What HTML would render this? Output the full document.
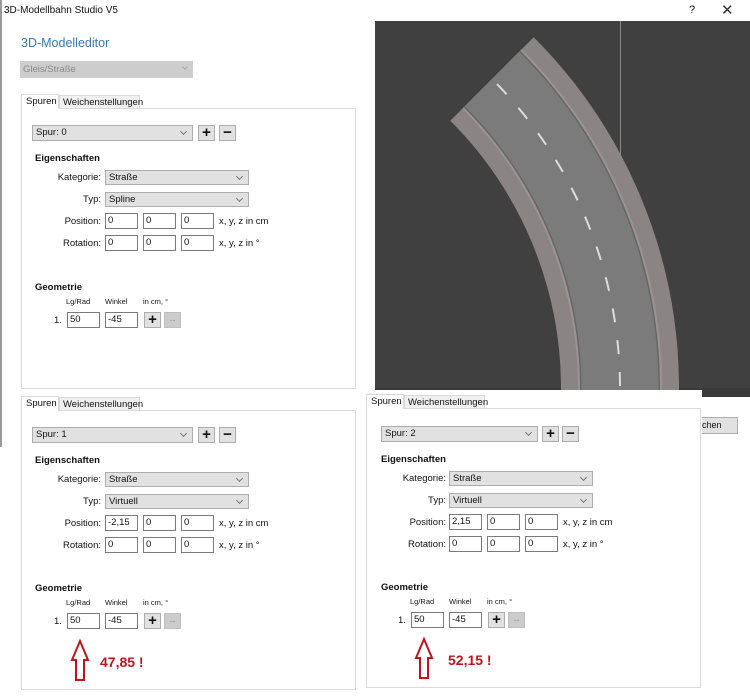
<!DOCTYPE html>
<html><head><meta charset="utf-8">
<style>
*{box-sizing:border-box;margin:0;padding:0}
body{width:750px;height:697px;background:#fff;position:relative;overflow:hidden;font-family:"Liberation Sans",sans-serif;font-size:9.5px;color:#111}
.a{position:absolute}
.panel{position:absolute;width:335px;height:295px}
.box{position:absolute;left:0;top:14px;width:335px;height:281px;border:1px solid #d9d9d9;background:#fff}
.tab{position:absolute;top:0;height:15px;line-height:14px;padding:0 4px;font-size:9.5px}
.t1{left:0;width:38px;background:#fff;border:1px solid #d9d9d9;border-bottom:none;z-index:2;height:15px}
.t2{left:38px;width:81px;top:1px;height:14px;background:#f0f0f0;border:1px solid #d9d9d9;padding:0 3px}
.cb{position:absolute;height:16px;background:#e1e1e1;border:1px solid #adadad;line-height:14px;padding-left:3px}
.cb:after{content:"";position:absolute;right:6px;top:3px;width:4px;height:4px;border-right:1px solid #777;border-bottom:1px solid #777;transform:rotate(45deg)}
.btn{position:absolute;width:17px;height:16px;background:#e1e1e1;border:1px solid #adadad;text-align:center;line-height:14px;font-size:15px;font-weight:bold}
.dis{background:#ccc;border-color:#bfbfbf;color:#999;font-size:9px;font-weight:normal}
.in{position:absolute;height:16px;background:#fff;border:1px solid #7a7a7a;line-height:14px;padding-left:2px}
.lbl{position:absolute;text-align:right;width:80px}
.b{position:absolute;font-weight:bold;font-size:9.5px}
.red{position:absolute;color:#c0141c;font-weight:bold;font-size:14px}
</style></head><body>
<div class="a" style="left:0;top:0;width:750px;height:21px;background:#fff"></div>
<div class="a" style="left:0;top:0;width:2px;height:447px;background:#9a9a9a"></div>
<div class="a" style="left:4px;top:5px;font-size:10px">3D-Modellbahn Studio V5</div>
<div class="a" style="left:689px;top:4px;font-size:11px">?</div>
<div class="a" style="left:721px;top:1px;font-size:15px;color:#333">✕</div>
<div class="a" style="left:21px;top:36px;font-size:12.5px;color:#3a78b0">3D-Modelleditor</div>
<div class="a" style="left:20px;top:61px;width:173px;height:17px;background:#cdcdcd;color:#8a8a8a;line-height:17px;padding-left:3px">Gleis/Straße</div>
<div class="a" style="left:183px;top:65px;width:4px;height:4px;border-right:1px solid #aaa;border-bottom:1px solid #aaa;transform:rotate(45deg)"></div>

<svg class="a" style="left:375px;top:21px" width="375" height="376" viewBox="375 21 375 376">
<rect x="375" y="21" width="375" height="376" fill="#404040"/>
<line x1="620.5" y1="21" x2="620.5" y2="160" stroke="#8a8a8a" stroke-width="1"/>
<rect x="375" y="388" width="375" height="9" fill="#3a3a3a"/>
<g fill="none">
<path d="M620 392 L620 388 A437 437 0 0 0 492 79" stroke="#8b8484" stroke-width="118"/>
<path d="M620 392 L620 388 A437 437 0 0 0 492 79" stroke="#9a9494" stroke-width="84"/>
<path d="M620 392 L620 388 A437 437 0 0 0 492 79" stroke="#666" stroke-width="80"/>
<path d="M620 392 L620 388 A437 437 0 0 0 492 79" stroke="#7b7b7b" stroke-width="77"/>
<path d="M620 388 A437 437 0 0 0 492 79" stroke="#dcdcdc" stroke-width="2" stroke-dasharray="14 18" stroke-dashoffset="-2"/>
</g>
</svg>
<div class="a" style="left:700px;top:417px;width:38px;height:17px;background:#e1e1e1;border:1px solid #adadad;line-height:15px;font-size:9px;padding-left:1px">chen</div>

<!-- panel 1 -->
<div class="panel" style="left:21px;top:94px">
<div class="tab t1">Spuren</div><div class="tab t2">Weichenstellungen</div>
<div class="box"></div>
<div class="cb" style="left:11px;top:31px;width:161px">Spur: 0</div>
<div class="btn" style="left:177px;top:31px">+</div><div class="btn" style="left:198px;top:31px">−</div>
<div class="b" style="left:14px;top:59px">Eigenschaften</div>
<div class="lbl" style="left:0;top:78px">Kategorie:</div><div class="cb" style="left:84px;top:76px;width:144px;height:15px">Straße</div>
<div class="lbl" style="left:0;top:100px">Typ:</div><div class="cb" style="left:84px;top:98px;width:144px;height:15px">Spline</div>
<div class="lbl" style="left:0;top:122px">Position:</div>
<div class="in" style="left:84px;top:119px;width:33px">0</div><div class="in" style="left:122px;top:119px;width:33px">0</div><div class="in" style="left:160px;top:119px;width:33px">0</div>
<div class="a" style="left:198px;top:122px">x, y, z in cm</div>
<div class="lbl" style="left:0;top:144px">Rotation:</div>
<div class="in" style="left:84px;top:141px;width:33px">0</div><div class="in" style="left:122px;top:141px;width:33px">0</div><div class="in" style="left:160px;top:141px;width:33px">0</div>
<div class="a" style="left:198px;top:144px">x, y, z in °</div>
<div class="b" style="left:14px;top:188px">Geometrie</div>
<div class="a" style="left:45px;top:203px;font-size:7.5px">Lg/Rad</div><div class="a" style="left:84px;top:203px;font-size:7.5px">Winkel</div><div class="a" style="left:122px;top:203px;font-size:7.5px">in cm, °</div>
<div class="a" style="left:33px;top:221px">1.</div>
<div class="in" style="left:46px;top:218px;width:33px">50</div><div class="in" style="left:84px;top:218px;width:33px">-45</div>
<div class="btn" style="left:123px;top:218px">+</div><div class="btn dis" style="left:143px;top:218px">--</div>
</div>

<!-- panel 2 -->
<div class="panel" style="left:21px;top:396px">
<div class="tab t1">Spuren</div><div class="tab t2">Weichenstellungen</div>
<div class="box" style="height:280px"></div>
<div class="cb" style="left:11px;top:31px;width:161px">Spur: 1</div>
<div class="btn" style="left:177px;top:31px">+</div><div class="btn" style="left:198px;top:31px">−</div>
<div class="b" style="left:14px;top:59px">Eigenschaften</div>
<div class="lbl" style="left:0;top:78px">Kategorie:</div><div class="cb" style="left:84px;top:76px;width:144px;height:15px">Straße</div>
<div class="lbl" style="left:0;top:100px">Typ:</div><div class="cb" style="left:84px;top:98px;width:144px;height:15px">Virtuell</div>
<div class="lbl" style="left:0;top:122px">Position:</div>
<div class="in" style="left:84px;top:119px;width:33px">-2,15</div><div class="in" style="left:122px;top:119px;width:33px">0</div><div class="in" style="left:160px;top:119px;width:33px">0</div>
<div class="a" style="left:198px;top:122px">x, y, z in cm</div>
<div class="lbl" style="left:0;top:144px">Rotation:</div>
<div class="in" style="left:84px;top:141px;width:33px">0</div><div class="in" style="left:122px;top:141px;width:33px">0</div><div class="in" style="left:160px;top:141px;width:33px">0</div>
<div class="a" style="left:198px;top:144px">x, y, z in °</div>
<div class="b" style="left:14px;top:187px">Geometrie</div>
<div class="a" style="left:45px;top:202px;font-size:7.5px">Lg/Rad</div><div class="a" style="left:84px;top:202px;font-size:7.5px">Winkel</div><div class="a" style="left:122px;top:202px;font-size:7.5px">in cm, °</div>
<div class="a" style="left:33px;top:220px">1.</div>
<div class="in" style="left:46px;top:217px;width:33px">50</div><div class="in" style="left:84px;top:217px;width:33px">-45</div>
<div class="btn" style="left:123px;top:217px">+</div><div class="btn dis" style="left:143px;top:217px">--</div>
<svg class="a" style="left:48px;top:243px" width="22" height="44"><path d="M11 2 L19 21 L15 21 L15 41 L7 41 L7 21 L3 21 Z" fill="none" stroke="#c0141c" stroke-width="2"/></svg>
<div class="red" style="left:79px;top:258px">47,85 !</div>
</div>

<!-- panel 3 popup -->
<div class="a" style="left:365px;top:390px;width:337px;height:302px;background:#fff"></div>
<div class="panel" style="left:366px;top:394px">
<div class="tab t1">Spuren</div><div class="tab t2">Weichenstellungen</div>
<div class="box" style="height:280px"></div>
<div class="cb" style="left:15px;top:32px;width:157px">Spur: 2</div>
<div class="btn" style="left:176px;top:32px">+</div><div class="btn" style="left:196px;top:32px">−</div>
<div class="b" style="left:15px;top:60px">Eigenschaften</div>
<div class="lbl" style="left:0;top:79px">Kategorie:</div><div class="cb" style="left:83px;top:77px;width:144px;height:15px">Straße</div>
<div class="lbl" style="left:0;top:101px">Typ:</div><div class="cb" style="left:83px;top:99px;width:144px;height:15px">Virtuell</div>
<div class="lbl" style="left:0;top:123px">Position:</div>
<div class="in" style="left:83px;top:120px;width:33px">2,15</div><div class="in" style="left:121px;top:120px;width:33px">0</div><div class="in" style="left:159px;top:120px;width:33px">0</div>
<div class="a" style="left:197px;top:123px">x, y, z in cm</div>
<div class="lbl" style="left:0;top:145px">Rotation:</div>
<div class="in" style="left:83px;top:142px;width:33px">0</div><div class="in" style="left:121px;top:142px;width:33px">0</div><div class="in" style="left:159px;top:142px;width:33px">0</div>
<div class="a" style="left:197px;top:145px">x, y, z in °</div>
<div class="b" style="left:15px;top:188px">Geometrie</div>
<div class="a" style="left:44px;top:203px;font-size:7.5px">Lg/Rad</div><div class="a" style="left:83px;top:203px;font-size:7.5px">Winkel</div><div class="a" style="left:121px;top:203px;font-size:7.5px">in cm, °</div>
<div class="a" style="left:32px;top:221px">1.</div>
<div class="in" style="left:45px;top:218px;width:33px">50</div><div class="in" style="left:83px;top:218px;width:33px">-45</div>
<div class="btn" style="left:122px;top:218px">+</div><div class="btn dis" style="left:142px;top:218px">--</div>
<svg class="a" style="left:47px;top:243px" width="22" height="44"><path d="M11 2 L19 21 L15 21 L15 41 L7 41 L7 21 L3 21 Z" fill="none" stroke="#c0141c" stroke-width="2"/></svg>
<div class="red" style="left:82px;top:258px">52,15 !</div>
</div>
</body></html>
